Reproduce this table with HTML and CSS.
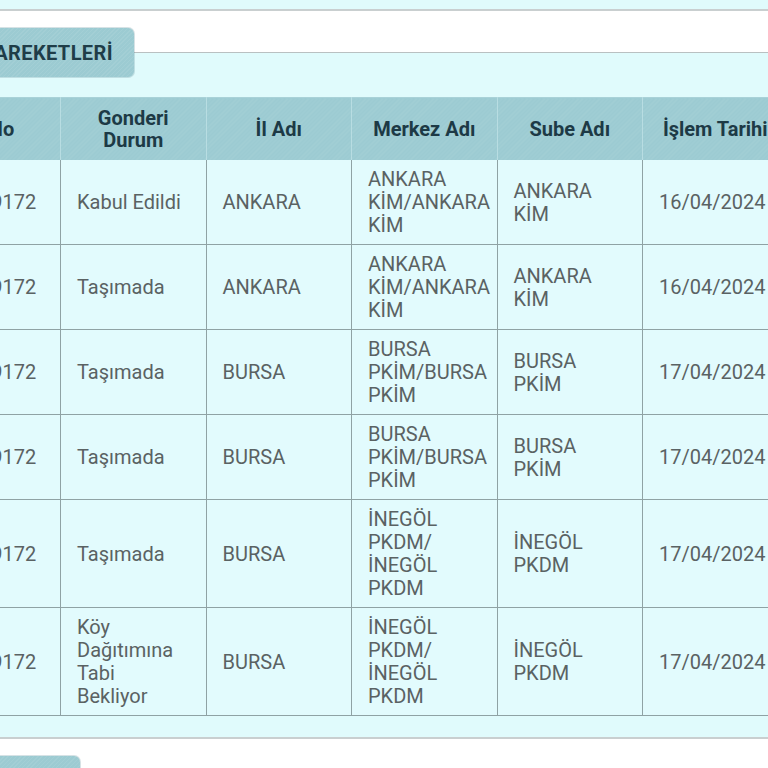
FILE: index.html
```html
<!DOCTYPE html>
<html lang="tr">
<head>
<meta charset="utf-8">
<title>Gönderi Hareketleri</title>
<link rel="stylesheet" href="styles.css">
</head>
<body>
<div class="page">
  <div class="panel panel-prev"></div>
  <section class="panel panel-main">
    <div class="tab">GÖNDERİ HAREKETLERİ</div>
    <table class="moves">
      <colgroup>
        <col class="c-no"><col class="c-std"><col class="c-std"><col class="c-std"><col class="c-std"><col class="c-std">
      </colgroup>
      <thead>
        <tr>
          <th>Barkod No</th>
          <th>Gonderi<br>Durum</th>
          <th>İl Adı</th>
          <th>Merkez Adı</th>
          <th>Sube Adı</th>
          <th>İşlem Tarihi</th>
        </tr>
      </thead>
      <tbody>
        <tr>
          <td>2729104729172</td>
          <td>Kabul Edildi</td>
          <td>ANKARA</td>
          <td>ANKARA KİM/ANKARA KİM</td>
          <td class="sube">ANKARA KİM</td>
          <td>16/04/2024</td>
        </tr>
        <tr>
          <td>2729104729172</td>
          <td>Taşımada</td>
          <td>ANKARA</td>
          <td>ANKARA KİM/ANKARA KİM</td>
          <td class="sube">ANKARA KİM</td>
          <td>16/04/2024</td>
        </tr>
        <tr>
          <td>2729104729172</td>
          <td>Taşımada</td>
          <td>BURSA</td>
          <td>BURSA PKİM/BURSA PKİM</td>
          <td class="sube">BURSA PKİM</td>
          <td>17/04/2024</td>
        </tr>
        <tr>
          <td>2729104729172</td>
          <td>Taşımada</td>
          <td>BURSA</td>
          <td>BURSA PKİM/BURSA PKİM</td>
          <td class="sube">BURSA PKİM</td>
          <td>17/04/2024</td>
        </tr>
        <tr>
          <td>2729104729172</td>
          <td>Taşımada</td>
          <td>BURSA</td>
          <td>İNEGÖL PKDM/ İNEGÖL PKDM</td>
          <td class="sube">İNEGÖL PKDM</td>
          <td>17/04/2024</td>
        </tr>
        <tr>
          <td>2729104729172</td>
          <td>Köy Dağıtımına Tabi Bekliyor</td>
          <td>BURSA</td>
          <td>İNEGÖL PKDM/ İNEGÖL PKDM</td>
          <td class="sube">İNEGÖL PKDM</td>
          <td>17/04/2024</td>
        </tr>
      </tbody>
    </table>
  </section>
  <section class="panel panel-next">
    <div class="tab tab-short"></div>
  </section>
</div>
</body>
</html>
```

FILE: styles.css
```css
html, body {
  margin: 0;
  padding: 0;
  background: #ffffff;
  overflow: hidden;
}

body {
  width: 768px;
  height: 768px;
  font-family: Roboto, "Liberation Sans", sans-serif;
}

.page {
  margin-left: -127px;
  width: 1020px;
  display: flex;
  flex-direction: column;
  gap: 41px;
}

.panel {
  position: relative;
  background: #e0fbfc;
  border-top: 1px solid #b9c0c1;
  border-bottom: 2px solid #c9cfd0;
}

.panel-prev {
  border-top: none;
  height: 9px;
}

.panel-main {
  padding: 44px 0 21px 0;
}

.panel-next {
  height: 60px;
}

.tab {
  position: absolute;
  top: -25px;
  left: -51px;
  width: 312px;
  height: 49px;
  box-sizing: border-box;
  padding-right: 21px;
  display: flex;
  align-items: center;
  justify-content: flex-end;
  background-color: #9ccbd2;
  background-image: repeating-linear-gradient(135deg, rgba(255,255,255,0.07) 0 1px, rgba(0,0,0,0) 1px 3px);
  border-radius: 6px;
  box-shadow: 0 0 0 1px rgba(90,140,150,0.25);
  color: #1f3d48;
  font-weight: 700;
  font-size: 20px;
  letter-spacing: 0.4px;
  white-space: nowrap;
}

.tab-short {
  width: 280px;
  left: -73px;
}

.moves {
  border-collapse: collapse;
  table-layout: fixed;
  width: 915px;
}

.c-no { width: 187px; }
.c-std { width: 145.5px; }

.moves th {
  background-color: #9ccbd2;
  background-image: repeating-linear-gradient(135deg, rgba(255,255,255,0.07) 0 1px, rgba(0,0,0,0) 1px 3px);
  color: #1d3a46;
  font-weight: 700;
  font-size: 20px;
  line-height: 22px;
  padding: 9px 4px 9px 4px;
  text-align: center;
  vertical-align: middle;
  border-left: 1px solid #b8dde2;
  border-right: 1px solid #b8dde2;
  border-top: 1px solid #a9d2d8;
}

.moves td {
  color: #5a6263;
  font-size: 20px;
  line-height: 23px;
  padding: 8px 20px 7px 16px;
  vertical-align: middle;
  border: 1px solid #8fa2a4;
  background: #e2fbfd;
}

.moves td.sube {
  padding-right: 30px;
}

.moves tbody tr:first-child td {
  border-top: none;
}
```
